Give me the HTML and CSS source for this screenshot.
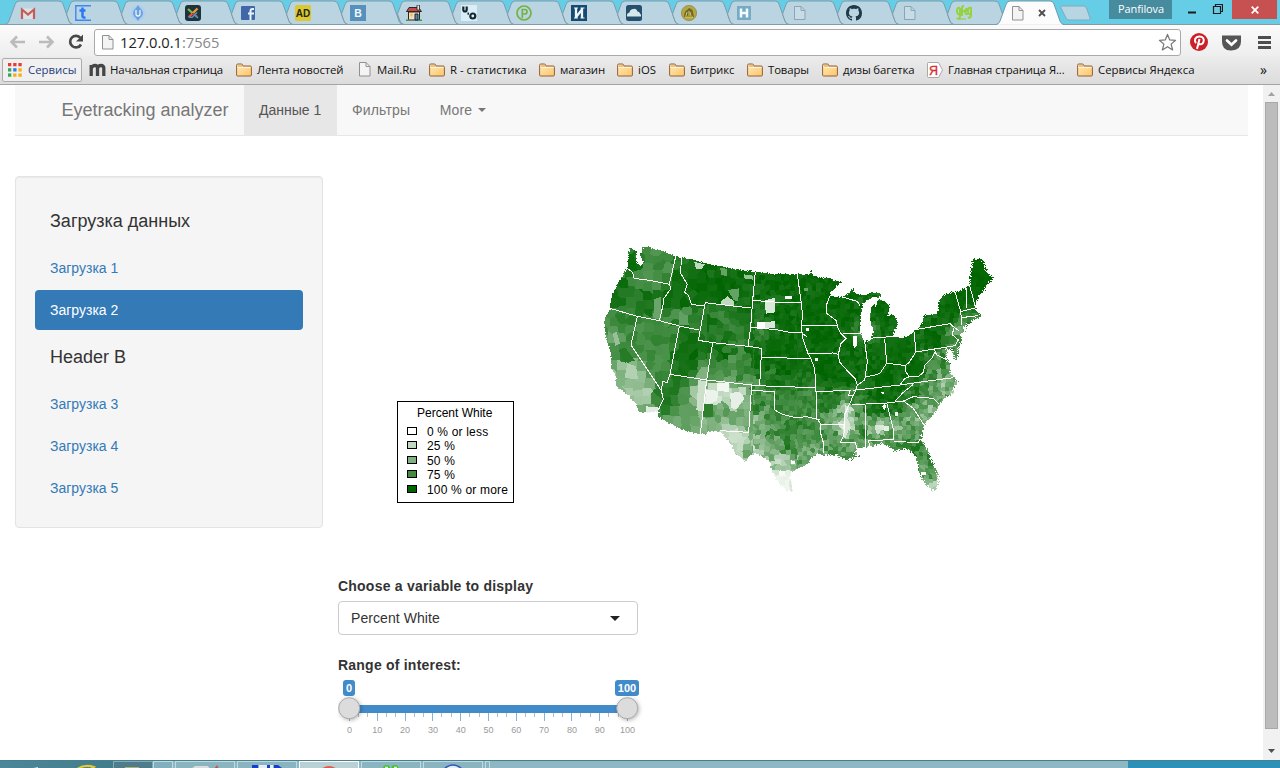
FILE: index.html
```html
<!DOCTYPE html>
<html lang="ru">
<head>
<meta charset="utf-8">
<title>Eyetracking analyzer</title>
<link rel="stylesheet" href="styles.css">
</head>
<body>
<svg class="defs" width="0" height="0" aria-hidden="true">
  <defs>
    <linearGradient id="gf" x1="0" y1="0" x2="1" y2="1"><stop offset="0" stop-color="#ffe9b8"/><stop offset="1" stop-color="#fcc66c"/></linearGradient>
    <symbol id="folder" viewBox="0 0 16 14"><path d="M.6 12V2.2Q.6 1 1.8 1h3.6q1 0 1.3 1.3l.2.7h7.3q1.2 0 1.2 1.2V12q0 1-1 1H1.600q-1 0-1-1z" fill="url(#gf)" stroke="#936037"/><path d="M1.500 4.500h13" stroke="#fff3d2"/><path d="M2 3h4" stroke="#d5a25f"/></symbol>
    <symbol id="page" viewBox="0 0 12 15"><path d="M.5.500h6.500l4 4v9.500H.5z" fill="#f4f4f4" stroke="#919191"/><path d="M7 .5v4h4" fill="none" stroke="#919191"/></symbol>
    <symbol id="pageblue" viewBox="0 0 12 15"><path d="M.5.500h6.500l4 4v9H.5z" fill="#c7dce6" stroke="#8ba5b1"/><path d="M7 .5v4h4" fill="none" stroke="#8ba5b1"/></symbol>
    <symbol id="tab" viewBox="0 0 68 25"><path d="M13 24.500Q10 24 9 21L6.500 14L10 4.500Q11 1 14 1H54Q57 1 58 4L64 21Q65 24 68 24.500z" fill="#bad4e2" stroke="#7b9dac"/></symbol>
  </defs>
</svg>

<div class="tabs">
  <div class="tab"><svg class="shape" viewBox="0 0 68 25"><path d="M0 24.500Q3 24 4 21L10 4.500Q11 1 14 1H54Q57 1 58 4L64 21Q65 24 68 24.500z" fill="#bad4e2" stroke="#7b9dac"/></svg><svg class="fav" viewBox="0 0 16 16"><path d="M2 3.500h12v10.500H2z" fill="#dce1e4"/><path d="M2 14V4.500l6 5 6-5V14" fill="none" stroke="#c75b55" stroke-width="2.200"/></svg></div>
  <div class="tab"><svg class="shape"><use href="#tab"/></svg><svg class="fav" viewBox="0 0 16 16"><path d="M16 .8H.8v14.400H16" fill="none" stroke="#3d87f5" stroke-width="1.400"/><path d="M7.500 2.500V11q0 2 3 1.500M4.500 5.500h6" fill="none" stroke="#287af5" stroke-width="2.500"/></svg></div>
  <div class="tab"><svg class="shape"><use href="#tab"/></svg><svg class="fav" viewBox="0 0 16 16"><circle cx="8" cy="8" r="7.500" fill="#acd0ed"/><path d="M8 0l2 3q3 2 3 5t-3 5l-2 3-2-3q-3-2-3-5t3-5z" fill="#69a0df"/><path d="M6 5v4q0 2 2 2t2-2V5" fill="none" stroke="#edf5fc" stroke-width="1.300"/></svg></div>
  <div class="tab"><svg class="shape"><use href="#tab"/></svg><svg class="fav" viewBox="0 0 16 16"><rect width="16" height="16" rx="3" fill="#1e333c"/><g fill="none" stroke-width="2.300"><path d="M3.500 12.500l4-4M9 9l3 3" stroke="#f04d3d"/><path d="M3 4l4.500 4" stroke="#7fb840"/><path d="M8 8l4.500-4.500" stroke="#f49b29"/><path d="M4 12l3 .5 5-5M11 11l2 2" stroke="#3c9bd5" stroke-width="1.500"/></g></svg></div>
  <div class="tab"><svg class="shape"><use href="#tab"/></svg><svg class="fav" viewBox="0 0 16 16"><rect x="1" y="1" width="14" height="14" rx="1" fill="#4267a9"/><path d="M10.500 15V6q0-2 2-2h1.500M8 8.500h6" fill="none" stroke="#e9f3fb" stroke-width="2"/></svg></div>
  <div class="tab"><svg class="shape"><use href="#tab"/></svg><svg class="fav" viewBox="0 0 16 16"><rect width="16" height="16" rx="1.500" fill="#ddc92f"/><text x="8" y="12" text-anchor="middle" class="ft" font-size="10" fill="#20281d">AD</text></svg></div>
  <div class="tab"><svg class="shape"><use href="#tab"/></svg><svg class="fav" viewBox="0 0 16 16"><rect width="16" height="16" fill="#5890bd"/><text x="8" y="12" text-anchor="middle" class="ft" font-size="10.500" fill="#f0f8fc">B</text></svg></div>
  <div class="tab"><svg class="shape"><use href="#tab"/></svg><svg class="fav" viewBox="0 0 16 16"><path d="M2.500 7h11v8h-11z" fill="#f1dfc4" stroke="#2b2725"/><path d="M.5 6.500L3 2.500h9.500l3 4z" fill="#c4484b" stroke="#2b2725"/><path d="M11 0h2.500v5H11z" fill="#dce3e8" stroke="#2b2725" stroke-width=".8"/><path d="M9 9h3v6H9z" fill="#3b8fb8" stroke="#222"/><path d="M4.500 8.500h2v3h-2z" fill="#f5b942"/><path d="M0 15.300h3M13 15.300h3" stroke="#3c9b4a" stroke-width="1.500"/></svg></div>
  <div class="tab"><svg class="shape"><use href="#tab"/></svg><svg class="fav" viewBox="0 0 16 16"><rect width="16" height="16" fill="#d9eef6"/><g fill="none" stroke="#17272f" stroke-width="2.200"><path d="M2.300 1.500v3q0 2 1.700 2t1.700-2v-3"/><circle cx="11.800" cy="11" r="2.500"/></g><path d="M7.200 7.500v2.300" stroke="#17272f" stroke-width="1.500"/></svg></div>
  <div class="tab"><svg class="shape"><use href="#tab"/></svg><svg class="fav" viewBox="0 0 16 16"><g fill="none" stroke="#73b343" stroke-width="1.700"><circle cx="8" cy="8" r="7"/><path d="M6.300 13V4.500h2.500q2.200 0 2.200 2.200T8.800 9H6.300"/></g></svg></div>
  <div class="tab"><svg class="shape"><use href="#tab"/></svg><svg class="fav" viewBox="0 0 16 16"><rect width="16" height="16" fill="#174a70"/><path d="M5 3v10M11 3v10M5.500 11.500l5.500-7" stroke="#eef6fa" stroke-width="2.300"/><path d="M3 3h4M9.500 3h4M3 13h4M9.500 13h4" stroke="#eef6fa"/></svg></div>
  <div class="tab"><svg class="shape"><use href="#tab"/></svg><svg class="fav" viewBox="0 0 16 16"><rect width="16" height="16" rx="2.500" fill="#254f6b"/><path d="M1 11.500q-.500-3.500 2.500-4 .500-3.500 4-3.500 3-1 4 2.500 2 0 2.500 2 1.500 1 1 3z" fill="#d7e7ee"/></svg></div>
  <div class="tab"><svg class="shape"><use href="#tab"/></svg><svg class="fav" viewBox="0 0 16 16"><circle cx="8" cy="8" r="7.600" fill="#b5a744" stroke="#92883a" stroke-width=".8"/><path d="M3 12q0-6 3-7l2-2q4 1 4 4l1 5z" fill="#71682a"/><path d="M5 11l1-4M8 11V6M10 11L9 7M4 12h8" stroke="#d5c96b"/></svg></div>
  <div class="tab"><svg class="shape"><use href="#tab"/></svg><svg class="fav" viewBox="0 0 16 16"><rect x="1" y="1" width="14" height="14" fill="#76abc3"/><path d="M5 3.500v9M11 3.500v9M5 8h6" stroke="#f2fafd" stroke-width="2.500"/></svg></div>
  <div class="tab"><svg class="shape"><use href="#tab"/></svg><svg class="doc"><use href="#pageblue"/></svg></div>
  <div class="tab"><svg class="shape"><use href="#tab"/></svg><svg class="fav" viewBox="0 0 16 16"><path fill="#1d3a46" d="M8 0C3.580 0 0 3.580 0 8c0 3.540 2.290 6.530 5.470 7.590.4.070.55-.17.55-.38 0-.19-.01-.82-.01-1.490-2.010.37-2.530-.49-2.690-.94-.09-.23-.48-.94-.82-1.130-.28-.15-.68-.52-.01-.53.63-.01 1.080.58 1.230.82.72 1.210 1.870.87 2.330.66.070-.52.280-.87.510-1.070-1.780-.2-3.640-.89-3.640-3.950 0-.87.310-1.590.82-2.150-.08-.2-.36-1.020.08-2.120 0 0 .67-.21 2.200.82.64-.18 1.320-.27 2-.27s1.360.09 2 .27c1.530-1.040 2.200-.82 2.200-.82.440 1.100.16 1.920.08 2.120.51.56.82 1.270.82 2.150 0 3.070-1.870 3.750-3.650 3.950.29.25.54.730.54 1.480 0 1.070-.01 1.930-.01 2.200 0 .21.150.46.55.38A8.010 8.010 0 0016 8c0-4.420-3.580-8-8-8z"/></svg></div>
  <div class="tab"><svg class="shape"><use href="#tab"/></svg><svg class="doc"><use href="#pageblue"/></svg></div>
  <div class="tab"><svg class="shape"><use href="#tab"/></svg><svg class="fav" viewBox="0 0 16 16"><g fill="none" stroke="#94d33a" stroke-width="1.900"><path d="M4 3q-3-1-3 3t3 3V3v9q-1 3-3 1M6 11V3q0-2 2-2M5 6h4M9 6h3q0-3-2-2-2 3 0 5h2M15 3q-3-1-3 3t3 3V2v9q-1 3-3 1"/><path d="M3 14h7" stroke-width="1.200"/></g></svg></div>
  <div class="tab active"><svg class="shape" viewBox="0 0 68 25"><path d="M0 24.500Q3 24 4 21L10 4.500Q11 1 14 1H54Q57 1 58 4L64 21Q65 24 68 24.500" fill="#fcfcfc" stroke="#6f99a8"/><path d="M2 25h64" stroke="#fcfcfc" stroke-width="1.500"/></svg><svg class="doc"><use href="#page"/></svg><svg class="x" viewBox="0 0 8 8"><path d="M1 1l6 6M7 1L1 7" stroke="#4d4d4d" stroke-width="1.800"/></svg></div>
  <svg class="newtab" viewBox="0 0 32 16"><path d="M1.500 1h22q2 0 3 2l3.500 10q1 2-1.500 2H9q-2 0-3-2L1 3Q.3 1 1.500 1z" fill="#b7d5e2" stroke="#82aaba"/></svg>
  <div class="user">Panfilova</div>
  <svg class="wmin" viewBox="0 0 36 20"><path d="M1 12.500h8" stroke="#1b1b1b" stroke-width="2"/><path d="M26.500 6.500h7v7h-7zM28.500 6V4.500h7v7H34" fill="none" stroke="#1b1b1b" stroke-width="1.200"/></svg>
  <div class="close"><svg width="8" height="8" viewBox="0 0 8 8"><path d="M.7.700l6.600 6.600M7.300.700L.7 7.300" stroke="#fff" stroke-width="1.700"/></svg></div>
</div>

<div class="toolbar">
  <svg class="nav" viewBox="0 0 86 22"><g fill="none" stroke="#bbb" stroke-width="2.600"><path d="M3.500 11H17M9 5.500L3.500 11 9 16.500M31 11h13.500M39 5.500l5.500 5.500-5.500 5.500"/></g><path d="M72.500 7A5.800 5.800 0 1 0 73 13.500" fill="none" stroke="#484848" stroke-width="2.700"/><path d="M75 3.500v7h-7z" fill="#484848"/></svg>
  <div class="omni"><svg class="odoc"><use href="#page"/></svg><span class="url">127.0.0.1<span class="port">:7565</span></span>
    <svg class="star" viewBox="0 0 20 20"><path d="M10 1.500l2.400 5.800 6.100.4-4.700 4 1.600 6.100L10 14.400l-5.400 3.400 1.600-6.100-4.700-4 6.100-.4z" fill="#fff" stroke="#777" stroke-width="1.300" stroke-linejoin="round"/></svg></div>
  <svg class="exts" viewBox="0 0 90 22"><circle cx="9" cy="11" r="9" fill="#cb2027"/><path d="M6 12.200C3.500 9 5.500 5.700 9.200 5.600c4-.1 5.300 2.800 4.200 5.600-1 2.600-4 2.700-4.500 1M9.500 8L7 18" fill="none" stroke="#fff" stroke-width="2"/><path d="M32 4.500h19v6q0 8.500-9.500 9T32 10.500z" fill="#555"/><path d="M37 9.500l4.500 4.200L46 9.500" fill="none" stroke="#fff" stroke-width="2.700" stroke-linecap="round"/><path d="M68 6.500h13M68 11.500h13M68 16.500h13" stroke="#4d4d4d" stroke-width="3"/></svg>
</div>

<div class="bookmarks">
  <div class="apps"><svg width="14" height="14" viewBox="0 0 14 14"><path d="M0 0h3.300v3.300H0zM5.200 0h3.300v3.300H5.200zM10.400 0h3.300v3.300h-3.300z" fill="#e73b34"/><path d="M0 5.200h3.300v3.300H0z" fill="#36a557"/><path d="M5.200 5.200h3.300v3.300H5.200z" fill="#2b7dec"/><path d="M10.400 5.200h3.300v3.300h-3.300zM5.200 10.400h3.300v3.300H5.200zM10.400 10.400h3.300v3.300h-3.300z" fill="#f5ae0a"/><path d="M0 10.400h3.300v3.300H0z" fill="#36a557"/></svg><span>Сервисы</span></div>
  <div class="bm tight" style="width:147px"><svg width="17" height="14" viewBox="0 0 17 14"><path d="M2.200 13V2M8.500 13V5q0-2.500-2.500-2.500T2.500 5M14.800 13V5q0-2.500-2.800-2.500T8.700 5" fill="none" stroke="#454545" stroke-width="3.300"/></svg><span>Начальная страница</span></div>
  <div class="bm snug" style="width:123px"><svg class="fo"><use href="#folder"/></svg><span>Лента новостей</span></div>
  <div class="bm mail" style="width:70px"><svg class="doc2"><use href="#page"/></svg><span>Mail.Ru</span></div>
  <div class="bm" style="width:110px"><svg class="fo"><use href="#folder"/></svg><span>R - статистика</span></div>
  <div class="bm snug" style="width:78px"><svg class="fo"><use href="#folder"/></svg><span>магазин</span></div>
  <div class="bm" style="width:52px"><svg class="fo"><use href="#folder"/></svg><span>iOS</span></div>
  <div class="bm snug" style="width:78px"><svg class="fo"><use href="#folder"/></svg><span>Битрикс</span></div>
  <div class="bm snug" style="width:75px"><svg class="fo"><use href="#folder"/></svg><span>Товары</span></div>
  <div class="bm snug" style="width:105px"><svg class="fo"><use href="#folder"/></svg><span>дизы багетка</span></div>
  <div class="bm snug" style="width:150px"><svg width="16" height="16" viewBox="0 0 16 16"><path d="M1.500.500h10l4 7.500-4 7.500h-10q-1 0-1-1v-13q0-1 1-1z" fill="#fff" stroke="#a9a9a9"/><text x="6.500" y="12.500" text-anchor="middle" font-size="12.500" class="ya">Я</text></svg><span>Главная страница Я...</span></div>
  <div class="bm" style="width:150px"><svg class="fo"><use href="#folder"/></svg><span>Сервисы Яндекса</span></div>
  <span class="more">»</span>
</div>

<div class="view">
  <div class="page">
    <nav class="navbar"><span class="brand">Eyetracking analyzer</span><a class="on">Данные 1</a><a>Фильтры</a><a>More <i class="caret"></i></a></nav>
    <div class="cols">
      <aside class="well">
        <h4>Загрузка данных</h4>
        <a>Загрузка 1</a>
        <a class="sel">Загрузка 2</a>
        <h4>Header B</h4>
        <a>Загрузка 3</a>
        <a>Загрузка 4</a>
        <a>Загрузка 5</a>
      </aside>
      <main class="main">
        <div class="plot">
          <div class="legend">
            <div class="ltitle">Percent White</div>
            <div class="lrow"><i class="c0"></i>0 % or less</div>
            <div class="lrow"><i class="c1"></i>25 %</div>
            <div class="lrow"><i class="c2"></i>50 %</div>
            <div class="lrow"><i class="c3"></i>75 %</div>
            <div class="lrow"><i class="c4"></i>100 % or more</div>
          </div>
          <div class="map">
            <canvas id="counties" width="420" height="265"></canvas>
            <svg viewBox="0 0 1260 795" shape-rendering="crispEdges">
              <g fill="none" stroke="#fff" stroke-width="3">
                <path d="M112 100L128 112 132 130 180 136 238 148M257 65L238 148 243 160 222 190 220 207 208 257M274 70L272 115 292 148 284 172 295 180 304 208 342 213M60 220L142 244 208 257 268 273 328 285M346 201L325 316 368 323 474 334 515 340M346 203L420 212 484 219M496 110L488 196 482 277 474 334M488 196L552 201 635 202M482 277L560 284 595 291 635 294 650 305M268 273L240 418M142 244L123 330 214 467 220 492 205 525M240 418L232 442 218 440 214 467M240 418L350 435 486 450 553 455 677 457M368 323L350 435 331 597M515 340L509 450M515 368L662 370M486 450L484 466 476 592 390 587M484 466L553 470 553 524 575 537 615 548 650 545 690 555M622 118L632 190 638 240 634 270 638 310 648 340 662 370 674 400 678 470 680 550 692 567 692 595 702 630 699 655"/>
                <path d="M636 272L740 271M650 355L730 354 745 358M757 186L780 193 802 199 810 212M721 180L710 208 710 235 740 258 742 275 752 295 768 310 753 325 745 358 748 380 770 405 795 430 802 450 795 470 775 515 763 540 765 580 760 605 751 622 796 622 800 638M678 469L780 467 775 482 790 482M692 568L762 568M758 297L814 294M824 318L832 380 824 435 810 445 802 452M838 310L912 304M884 312L890 385 870 415 850 422 824 425M890 385L920 388 945 392M972 290L978 350 958 382 945 392 945 408 958 425 945 430 930 450M790 466L930 450 1000 440 1090 428M785 509L890 504 940 498 970 485 1030 490 1048 508M970 448L940 472 915 498M940 498L970 520 1002 570M827 509L828 635M890 504L912 590 910 613 835 618 840 632M912 620L985 622 990 612 996 616M975 284L1080 266 1090 275 1108 288M1090 280L1088 300 1105 315 1095 332 978 351M958 425L985 425 1000 412 1005 390 1025 370 1035 350M1032 342L1040 360 1072 375M1095 170L1112 230 1116 270M1130 160L1128 220M1138 148L1155 212M1112 230L1160 218M1112 248L1165 242"/>
              </g>
            </svg>
          </div>
        </div>
        <label class="lab">Choose a variable to display</label>
        <div class="select"><span>Percent White</span><svg width="10" height="5" viewBox="0 0 10 5"><path d="M0 0h10L5 5z" fill="#222"/></svg></div>
        <label class="lab range">Range of interest:</label>
        <svg class="slider" width="312" height="64" viewBox="0 0 312 64">
          <path d="M20.500 39v4M29.500 39v4M48.500 39v4M57.500 39v4M76.500 39v4M85.500 39v4M103.500 39v4M113.500 39v4M131.500 39v4M141.500 39v4M159.500 39v4M168.500 39v4M187.500 39v4M196.500 39v4M215.500 39v4M224.500 39v4M242.500 39v4M252.500 39v4M270.500 39v4M280.500 39v4" stroke="#b5bcc2"/>
          <path d="M11.500 39v8M39.500 39v8M67.500 39v8M94.500 39v8M122.500 39v8M150.500 39v8M178.500 39v8M206.500 39v8M233.500 39v8M261.500 39v8M289.500 39v8" stroke="#85b3d8"/>
          <rect x="11" y="31" width="278" height="8" fill="#428bca"/>
          <rect x="5" y="6" width="12" height="16" rx="3" fill="#428bca"/><rect x="277" y="6" width="24" height="16" rx="3" fill="#428bca"/>
          <g class="tip"><text x="11" y="18">0</text><text x="289" y="18">100</text></g>
          <g class="knob"><circle cx="11.200" cy="34.200" r="10.500"/><circle cx="289.200" cy="34.200" r="10.500"/></g>
          <g class="ticks"><text x="11.500" y="59">0</text><text x="39.300" y="59">10</text><text x="67.100" y="59">20</text><text x="94.900" y="59">30</text><text x="122.700" y="59">40</text><text x="150.500" y="59">50</text><text x="178.300" y="59">60</text><text x="206.100" y="59">70</text><text x="233.900" y="59">80</text><text x="261.700" y="59">90</text><text x="289.500" y="59">100</text></g>
        </svg>
      </main>
    </div>
  </div>
  <div class="scroll"><svg width="7" height="4" viewBox="0 0 7 4"><path d="M0 4h7L3.500 0z" fill="#a3a3a3"/></svg><div class="thumb"></div><svg width="7" height="4" viewBox="0 0 7 4"><path d="M0 0h7L3.500 4z" fill="#505050"/></svg></div>
</div>

<div class="taskbar">
  <div class="quick"><svg width="113" height="8" viewBox="0 0 113 8"><path d="M29 8l9-2v2z" fill="#d3e5ec"/><path d="M77 8q8-5 17-2l-3 2" fill="none" stroke="#e6c634" stroke-width="2"/></svg></div>
  <div class="tb dim"><svg width="18" height="5" viewBox="0 0 18 5"><path d="M1 6V4h14v2z" fill="#b9ac75"/></svg></div>
  <div class="tb stack"></div>
  <div class="tb"><svg width="34" height="6" viewBox="0 0 34 6"><path d="M3 6l4-3h13l2 3z" fill="#d9dddc"/><path d="M26 6l3-4 2 4z" fill="#c8564d"/></svg></div>
  <div class="tb"><svg width="34" height="6" viewBox="0 0 34 6"><path d="M2 6V2h6v4zM24 6V2h4l4 3v1z" fill="#173ec7"/><path d="M9 2h14v4H9z" fill="#e6edf4"/><path d="M17 2h3v4h-3z" fill="#173ec7"/></svg></div>
  <div class="tb cur"><svg width="20" height="5" viewBox="0 0 20 5"><path d="M2 6q8-6 16 0z" fill="#e2594c"/></svg></div>
  <div class="tb"><svg width="20" height="6" viewBox="0 0 20 6"><circle cx="5.500" cy="5.500" r="3.500" fill="#42c52c"/><circle cx="14" cy="5.500" r="3.500" fill="#42c52c"/><path d="M4 4.500h3M13 4.500h3" stroke="#e0fbd9" stroke-width="1.500"/></svg></div>
  <div class="tb"><svg width="24" height="6" viewBox="0 0 24 6"><path d="M2 7q10-10 20 0z" fill="#e6eefa" stroke="#325bb5" stroke-width="1.500"/></svg></div>
  <div class="tb end"></div>
  <div class="rest"></div>
</div>
<script src="map.js"></script>
</body>
</html>
```
FILE: styles.css
```css
* { box-sizing: border-box; }
body { margin: 0; width: 1280px; height: 768px; overflow: hidden; background: #fff; display: flex; flex-direction: column; font: 14px/20px "Liberation Sans", Arial, sans-serif; color: #333; }
svg { display: block; flex: none; }
.defs { position: absolute; }

.tabs { height: 25px; flex: none; background: #66cde6; border-bottom: 1px solid #8b999f; display: flex; padding-left: 5px; position: relative; }
.tab { width: 55.080px; height: 25px; flex: none; position: relative; padding: 5px 0 0 15px; }
.shape { position: absolute; left: 0; top: 0; width: 68px; height: 25px; }
.fav { width: 16px; height: 16px; position: relative; }
.doc { width: 12px; height: 15px; margin: 1px 0 0 3px; position: relative; }
.ft { font-family: "Liberation Sans", sans-serif; font-weight: bold; }
.active.tab { z-index: 3; padding-left: 14px; display: flex; }
.active .doc { margin-left: 2px; }
.x { width: 8px; height: 8px; margin: 4px 0 0 14px; position: relative; }
.newtab { width: 32px; height: 16px; margin: 5px 0 0 9px; }
.user { margin-left: 17px; width: 63px; height: 19px; background: #478b9e; color: #fff; font: 11px/18px "Open Sans", sans-serif; text-align: center; letter-spacing: -.1px; }
.wmin { width: 36px; height: 20px; margin-left: 15px; }
.close { width: 45px; height: 19px; margin-left: auto; margin-right: 3px; background: #c75050; display: flex; align-items: center; justify-content: center; }

.toolbar { height: 31px; flex: none; background: linear-gradient(#fbfbfb, #eee); display: flex; padding: 4px 0 0 8px; }
.nav { width: 86px; height: 22px; margin-top: 2px; }
.omni { width: 1087px; height: 27px; border: 1px solid #a9a9a9; border-radius: 3px; background: #fff; display: flex; align-items: center; padding: 0 3px 0 7px; }
.odoc { width: 12px; height: 15px; }
.url { font: 14.700px/22px "Open Sans", sans-serif; color: #222; margin: -2px 0 0 6px; flex: 1; }
.port { color: #888; }
.star { width: 19px; height: 19px; }
.exts { width: 90px; height: 22px; margin: 2px 0 0 9px; }

.bookmarks { height: 29px; flex: none; background: linear-gradient(#ececec, #dcdcdc); border-bottom: 1px solid #a5a5a5; display: flex; padding: 2px 0 0 2px; font: 11.400px/24px "Open Sans", sans-serif; color: #111; white-space: nowrap; }
.apps { width: 80px; height: 24px; border: 1px solid #acacac; border-radius: 2px; background: #f0f0f0; color: #29407a; display: flex; align-items: center; gap: 6px; padding-left: 5px; margin-right: 7px; line-height: 22px; }
.bm { flex: none; height: 24px; display: flex; align-items: center; gap: 5px; }
.bm svg { margin-top: -1px; }
.tight { gap: 4px; letter-spacing: -.17px; }
.snug { letter-spacing: -.13px; }
.mail { gap: 6px; }
.fo { width: 16px; height: 14px; }
.doc2 { width: 12px; height: 15px; }
.ya { font-family: "Liberation Sans", sans-serif; fill: #d52b2b; stroke: #d52b2b; stroke-width: .3px; letter-spacing: 0; }
.more { font-size: 14px; margin-left: 33px; }

.view { height: 675px; flex: none; display: flex; }
.page { width: 1263px; padding-left: 15px; }
.navbar { width: 1233px; height: 51px; background: #f8f8f8; border-bottom: 1px solid #e7e7e7; display: flex; padding-left: 31px; color: #777; line-height: 50px; }
.brand { font-size: 18px; padding-left: 15.500px; width: 198px; white-space: nowrap; }
.navbar a { padding: 0 14.500px 0 15px; height: 50px; display: flex; align-items: center; letter-spacing: .15px; white-space: nowrap; }
.navbar a.on { background: #e7e7e7; color: #555; width: 93px; letter-spacing: 0; }
.caret { border: 4px solid transparent; border-top-color: #777; border-bottom: 0; margin-left: 6px; }
.cols { display: flex; align-items: flex-start; gap: 15px; padding-top: 40px; }
.well { width: 308px; height: 352px; background: #f5f5f5; border: 1px solid #e3e3e3; border-radius: 4px; box-shadow: inset 0 1px 1px rgba(0,0,0,.05); padding: 19px; display: flex; flex-direction: column; gap: 2px; }
.well h4 { font-size: 18px; font-weight: normal; line-height: 51px; height: 50px; margin: 0; padding-left: 15px; }
.well a { height: 40px; line-height: 40px; padding-left: 15px; color: #337ab7; border-radius: 4px; }
.well a.sel { background: #337ab7; color: #fff; }

.main { width: 910px; display: flex; flex-direction: column; }
.plot { height: 400px; display: flex; padding: 59px 0 0 59px; }
.legend { width: 117px; height: 102px; border: 1px solid #000; margin: 166px 76px 0 0; padding: 4px 0 0 9px; font-size: 12px; color: #000; white-space: nowrap; }
.ltitle { line-height: 14px; height: 19px; padding-left: 10px; }
.lrow { height: 14.500px; line-height: 15px; display: flex; align-items: center; gap: 10px; letter-spacing: .18px; }
.lrow i { width: 10px; height: 8px; border: 1px solid #000; margin-top: -3px; }
.c0 { background: #fff; } .c1 { background: #bfd8bf; } .c2 { background: #80b180; } .c3 { background: #408b40; } .c4 { background: #006400; }
.map { width: 420px; height: 265px; display: grid; }
.map > * { grid-area: 1 / 1; width: 420px; height: 265px; }
.lab { font-weight: bold; height: 20px; letter-spacing: .22px; }
.select { width: 300px; height: 34px; margin-top: 5px; border: 1px solid #ccc; border-radius: 4px; display: flex; align-items: center; justify-content: space-between; padding: 0 17px 0 12px; letter-spacing: .07px; }
.range { margin-top: 20px; }
.slider { margin-top: -1px; }
.tip { font: bold 11px "Liberation Sans", sans-serif; fill: #fff; text-anchor: middle; }
.knob { fill: #dcdcdc; stroke: #aaa; filter: drop-shadow(1px 1px 2px rgba(0,0,0,.3)); }
.ticks { font: 9px "Liberation Sans", sans-serif; fill: #999; text-anchor: middle; }

.scroll { width: 17px; background: #f1f1f1; display: flex; flex-direction: column; align-items: center; padding: 7px 0 7px; }
.thumb { width: 13px; height: 627px; margin: 6px 0 20px; background: #bcbcbc; border: 1px solid #a8a8a8; }

.taskbar { height: 8px; flex: none; background: #8db8c3; border-top: 1px solid #477f8e; display: flex; overflow: hidden; }
.quick { width: 113px; background: linear-gradient(90deg, #4b8799, #407c8b); }
.tb { width: 60px; margin-right: 2px; height: 10px; flex: none; border: 1px solid #bddae2; background: #8ab4bf; display: flex; justify-content: center; padding-top: 1px; }
.tb.dim { width: 40px; margin-right: 0; background: #4e7c8b; border-color: #82a9b4; }
.tb.stack { width: 20px; background: #83aebb; }
.tb.cur { border-color: #fff; background: #b9d0d5; }
.tb.end { width: 5px; }
.rest { margin-left: auto; width: 152px; background: #2b91b8; }
```
FILE: map.js
```js
// County choropleth: land outline plus a mosaic of cells shaded from a tone field.
// All coordinates are in a 1260x795 space, three units per canvas pixel.
const land = new Path2D("M118 35L140 50 138 80 152 95 160 80 150 60 162 33 210 45 257 65 300 72 360 88 430 101 495 110 560 117 660 118 663 107 668 122 690 128 720 130 735 138 758 140 740 155 720 172 721 184 757 186 775 175 795 157 790 170 800 178 830 180 845 171 870 176 875 185 850 187 835 193 822 205 816 203 818 215 812 235 811 290 817 308 825 318 838 318 848 300 850 285 842 265 840 240 842 225 852 208 856 221 864 194 885 200 898 210 897 235 890 250 906 238 918 248 922 270 912 290 910 303 930 310 960 300 972 288 985 280 998 262 1002 240 1035 238 1048 225 1045 205 1055 185 1070 177 1095 170 1130 160 1138 150 1143 120 1148 75 1165 70 1180 78 1190 110 1210 132 1195 145 1185 160 1170 180 1160 200 1155 215 1160 230 1178 242 1165 250 1150 250 1140 265 1118 275 1120 285 1138 280 1110 295 1115 315 1105 340 1102 375 1092 370 1090 345 1070 340 1068 370 1080 388 1080 410 1090 425 1105 440 1090 460 1092 475 1070 485 1050 505 1035 535 1010 560 1002 575 996 595 995 615 1010 640 1030 690 1045 720 1045 745 1038 767 1025 765 1005 745 984 705 978 665 960 650 945 640 915 648 895 632 875 625 850 632 830 636 800 640 795 650 815 672 795 660 790 672 770 675 740 660 700 660 685 655 665 668 655 685 625 700 605 710 600 725 605 750 610 768 590 765 565 745 545 705 540 680 520 665 495 655 480 662 465 678 435 655 425 630 400 600 390 590 350 590 348 598 330 597 295 590 265 580 200 543 210 530 145 532 140 510 120 485 80 455 78 425 65 400 62 350 48 310 42 260 60 225 65 180 105 110 112 100z");

// [x, y, tone 0..1, spread]
const anchors = [
  [125,70,.88,.1],[195,70,.72,.12],[200,110,.6,.2],[90,180,.88,.08],[165,190,.88,.07],[185,225,.85,.08],[265,150,.95,.04],[270,215,.9,.1],[275,240,.72,.14],[320,240,.8,.12],[310,265,.88,.08],
  [330,150,.96,.05],[400,150,.97,.04],[400,180,.96,.05],[460,150,.95,.05],[460,190,.93,.07],[345,190,.94,.05],[330,90,.93,.08],[450,215,.9,.08],[360,250,.88,.08],[390,250,.82,.1],[440,290,.83,.08],[400,300,.85,.08],[455,240,.9,.05],
  [550,150,.97,.05],[530,190,.93,.1],[560,240,.97,.05],[530,275,.85,.15],[560,330,.98,.04],[590,400,.97,.05],[545,420,.85,.16],[530,385,.95,.06],
  [300,350,.95,.06],[340,310,.9,.08],[290,400,.95,.05],[340,410,.78,.1],[400,370,.88,.12],[450,370,.75,.18],[430,425,.65,.18],[500,360,.9,.1],[385,340,.88,.1],
  [80,250,.75,.1],[75,310,.55,.15],[105,350,.85,.1],[120,400,.35,.08],[160,470,.38,.08],[95,440,.42,.1],[190,300,.75,.06],[160,330,.75,.06],[200,400,.74,.05],[180,370,.74,.06],
  [265,450,.84,.06],[240,500,.84,.06],[225,460,.85,.05],[300,500,.6,.08],[270,560,.58,.05],[330,490,.25,.1],[370,480,.15,.1],[440,490,.25,.18],[390,530,.65,.14],[440,560,.5,.1],
  [500,490,.75,.15],[500,520,.75,.18],[500,560,.5,.2],[430,600,.18,.08],[470,630,.38,.22],[540,580,.72,.18],[520,620,.45,.2],[600,490,.76,.08],[580,530,.76,.12],[640,525,.76,.08],[620,580,.8,.12],[600,630,.74,.18],[570,680,.4,.2],[620,680,.55,.22],[580,730,.05,.04],[650,640,.6,.18],[660,590,.75,.12],
  [640,150,.95,.06],[680,220,.97,.05],[690,310,.97,.04],[700,400,.98,.04],[770,240,.96,.06],[790,350,.95,.07],[770,430,.96,.05],[640,445,.88,.08],[640,475,.75,.1],[600,455,.85,.08],
  [720,500,.9,.1],[750,540,.55,.2],[770,570,.2,.15],[775,530,.28,.18],[720,600,.66,.18],[760,640,.66,.18],[800,530,.65,.2],[810,590,.7,.2],[800,490,.78,.16],
  [850,470,.94,.08],[850,490,.92,.08],[900,480,.95,.06],[860,560,.55,.22],[870,580,.25,.2],[850,530,.88,.1],[880,520,.9,.08],[880,610,.7,.14],[925,520,.88,.1],[935,570,.55,.2],[970,590,.65,.18],[960,640,.78,.12],
  [860,350,.95,.06],[860,400,.96,.05],[920,350,.97,.04],[890,430,.97,.05],[880,250,.96,.06],[830,290,.75,.18],[980,400,.99,.02],[1030,310,.97,.05],
  [1000,265,.93,.07],[1080,230,.94,.06],[1110,200,.98,.02],[1170,120,.99,.02],[1140,190,.98,.02],[1140,240,.8,.12],[1105,300,.65,.18],[1030,380,.8,.12],[1060,380,.7,.2],[1040,420,.65,.2],[1070,450,.5,.22],[1020,460,.65,.18],[980,470,.85,.14],[1020,520,.5,.2],[980,540,.55,.18],[1000,660,.76,.13],[1020,720,.65,.18],[1035,750,.25,.12]
];

// Single areas whose shade stands apart: [points, tone]
const patches = [
  ["M585 183h22v10h-22z",0],["M525 196l30-8v44l-28 4z",.15],["M502 262h22v20h-22z",0],["M524 262l30-4v20h-30z",.15],
  ["M312 80l32 8-10 15-16-2z",.25],["M392 200l20-16 20 14v14l-36-2z",.25],["M414 165l34-5-4 40-14-6z",.6],["M390 98l22 4v22l-18-4z",.6],["M462 118l28 4v12l-28-4z",.4],
  ["M192 192l22-6 0 66-24-2z",.58],["M325 436l26 2-10 90-22-2z",.2],["M335 395l20 2-4 38-38-4z",.5],["M380 443h36v28l-36-4z",.05],["M352 465l32 2-2 30-34 14z",.08],["M420 475l28-6 16 20-24 34-16-4z",.1],
  ["M340 508h28v38h-30z",.82],["M168 514l40 4-6 20-34-6z",.12],["M68 295l12-4 10 34-14 8z",.4],["M112 385l26 8 6 40-40-4z",.3],["M85 345l20-8 30 40-30 6z",.85],
  ["M789 303h12v30l-8 6-4-12z",0],["M648 280h9v8h-9zM675 370h9v8h-9z",0],["M642 158h12v9h-12z",.6],["M872 470l10 1-1 6-8-2zM876 514l8-6 6 8-8 10z",0],["M993 710h14v10h-14z",0],
  ["M602 676l12 2v8h-12z",0],["M764 510l14 6-6 34 10 20-16 40-8-6 6-50z",.15],["M882 572h14v15h-14z",.1],["M915 530h10v12h-10z",.05]
].map(([d, t]) => [new Path2D(d), t]);

function rnd(a, b, k) {
  const s = Math.sin(a * 127.1 + b * 311.7 + k * 74.7) * 43758.5453;
  return s - Math.floor(s);
}

function field(x, y) {
  let w = 0, t = 0, n = 0;
  for (const [ax, ay, at, an] of anchors) {
    const d = (ax - x) ** 2 + (ay - y) ** 2 + 60, k = 1 / (d * d);
    w += k; t += k * at; n += k * an;
  }
  return [t / w, n / w];
}

function cell(x, y, s) {
  const gx = Math.floor(x / s), gy = Math.floor(y / s);
  let best = 1e9, hit = null;
  for (let i = gx - 1; i <= gx + 1; i++) for (let j = gy - 1; j <= gy + 1; j++) {
    const cx = (i + .15 + .7 * rnd(i, j, 1)) * s, cy = (j + .15 + .7 * rnd(i, j, 2)) * s;
    const d = Math.max(Math.abs(cx - x), Math.abs(cy - y));
    if (d < best) { best = d; hit = [cx, cy, rnd(i, j, 3)]; }
  }
  return hit;
}

const ctx = document.getElementById("counties").getContext("2d");
const img = ctx.createImageData(420, 265);
const memo = new Map();
for (let py = 0; py < 265; py++) for (let px = 0; px < 420; px++) {
  const x = px * 3 + 1.5, y = py * 3 + 1.5;
  // The eastern and Gulf shores are more ragged than the rest.
  const e = x > 1050 || (y > 600 && x > 700) ? 9 : 5;
  const jx = (rnd(px, py, 5) - .5) * e, jy = (rnd(px, py, 6) - .5) * e;
  if (!ctx.isPointInPath(land, x + jx, y + jy)) continue;
  const size = x < 350 ? 27 : x < 490 ? 21 : x < 620 ? 15 : 13;
  const [cx, cy, r] = cell(x, y, size);
  const key = cx + "," + cy;
  if (!memo.has(key)) {
    const [t, n] = field(cx, cy);
    memo.set(key, Math.min(1, Math.max(0, t + (r - .5) * 2 * n)));
  }
  let tone = memo.get(key);
  for (const [p, t] of patches) if (ctx.isPointInPath(p, x, y)) tone = t;
  const o = (py * 420 + px) * 4;
  img.data[o] = 255 - 255 * tone;
  img.data[o + 1] = 255 - 155 * tone;
  img.data[o + 2] = 255 - 255 * tone;
  img.data[o + 3] = 255;
}
ctx.putImageData(img, 0, 0);
```
